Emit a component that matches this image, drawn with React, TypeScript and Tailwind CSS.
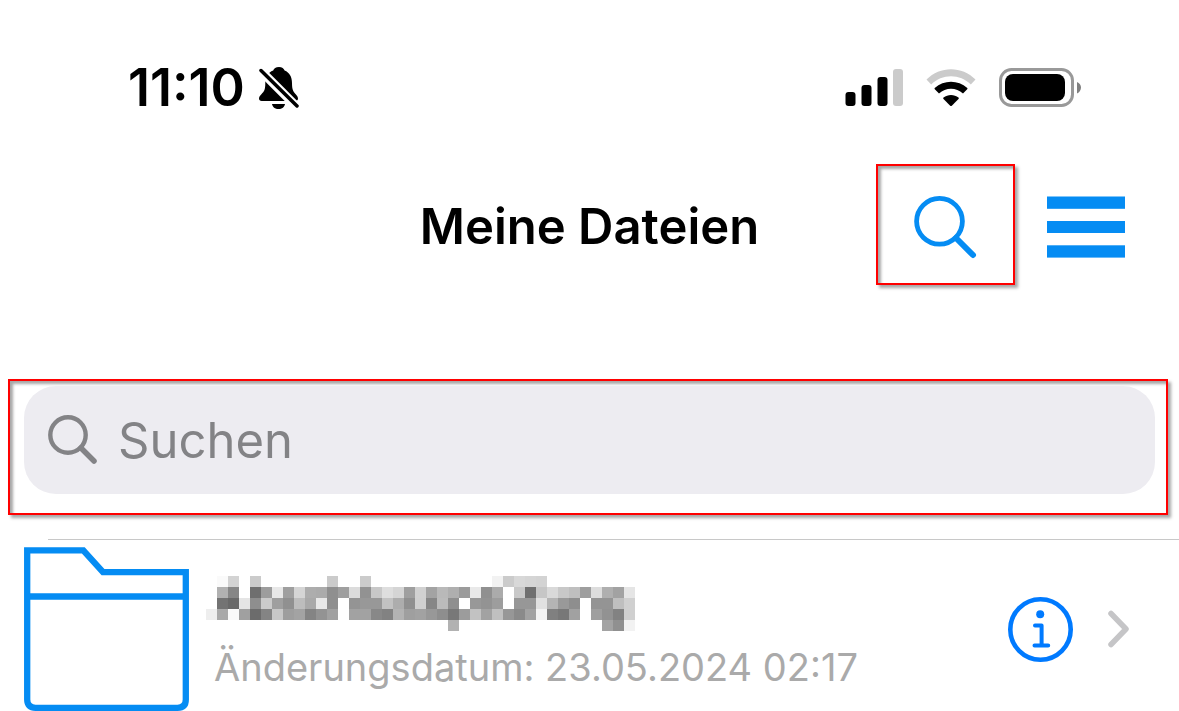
interface FileItem {
  id: string;
  changedAt: string;
  mosaic: string[];
}

// Hidden file names are drawn as grey tiles, two hex digits per tile
const files: FileItem[] = [
  {
    id: 'folder-1',
    changedAt: '23.05.2024 02:17',
    mosaic: [
      'fffad3ffcbffffffffffffcbffffcbfffffffffffffffffffffff2cbd8d5d3ffffffffffffffff',
      'ffb186ff6f9de89fd5adab8f9fdc92c8ded59fd1a3b9af9be990abffc86fc6d9c8bf9eddafa2e5',
      'ff7369e58ecb9f90bda9e88fff949898c2ad90d086bb8fff98939dff9797e1b4998eff9494bfd0',
      'eea9faa06c84c89ea38493a1ffa2a28882b39fa2988e789cc2a2c0978aa2f38078a1ff9f9282d0',
      'ffffffffffffffffffffffffffffffffffffffffffffb2ffffffffffffffffffffffffffa390f2'
    ]
  }
];

const TILE = 11;

const HiddenName = ({ rows }: { rows: string[] }) => (
  <svg width="429" height="55" shapeRendering="crispEdges" role="img" aria-label="Name ausgeblendet">
    {rows.map((row, y) =>
      (row.match(/../g) || []).map((tone, x) => (
        <rect
          key={`${x}-${y}`}
          x={x * TILE}
          y={y * TILE}
          width={TILE}
          height={TILE}
          fill={`#${tone}${tone}${tone}`}
        />
      ))
    )}
  </svg>
);

const BellOffIcon = () => (
  <svg width="40" height="44" viewBox="0 0 40 44" aria-hidden="true">
    <path d="M20 1C16.8 1 14.7 2.6 14.2 4.6C9 6.5 6.3 11 6.3 17C6.3 24 5 25.5 2.6 28C1 29.7 0 31 0 32.5C0 34 1 35 2.7 35H36C38 35 39 34 39 32.5C39 31 38 29.7 36.5 28C34 25.5 33 23 33 17C33 11 30.5 6.5 25.6 4.6C25 2.6 23 1 20 1Z" />
    <path d="M13 38H26C25.5 41 23 43 19.5 43S13.5 41 13 38Z" />
    <path d="M-1 2L39 42" stroke="white" strokeWidth="9" />
    <path d="M2 4.5L38 40" stroke="black" strokeWidth="3.5" strokeLinecap="round" />
  </svg>
);

const SignalIcon = () => (
  <svg width="58" height="38" viewBox="0 0 58 38" aria-hidden="true">
    <rect x="0.5" y="23" width="10" height="14" rx="3" />
    <rect x="16.5" y="16" width="10" height="21" rx="3" />
    <rect x="32.5" y="8" width="10" height="29" rx="3" />
    <rect x="48" y="0" width="10" height="37" rx="3" fill="#cbcbcb" />
  </svg>
);

const WifiIcon = () => (
  <svg width="50" height="38" viewBox="0 0 50 38" aria-hidden="true">
    <path
      d="M0.5 10.5C14 -3.3 36 -3.3 49.5 10.5L44.8 15.5C34 4.5 16 4.5 5.2 15.5Z"
      fill="#cbcbcb"
    />
    <path d="M8.7 19C18 10.5 32 10.5 41.3 19C41.6 19.5 41.6 19.9 41.2 20.3L37 24.5C30.2 18.2 19.8 18.2 13 24.5L8.8 20.3C8.4 19.9 8.4 19.5 8.7 19Z" />
    <path d="M17.5 28.5C21.8 25 28.2 25 32.5 28.5C33 29 33 29.5 32.5 30L25.8 36.7C25.3 37.2 24.7 37.2 24.2 36.7L17.5 30C17 29.5 17 29 17.5 28.5Z" />
  </svg>
);

const BatteryIcon = () => (
  <svg width="82" height="40" viewBox="0 0 82 40" aria-hidden="true">
    <rect x="1.5" y="1.5" width="72" height="36" rx="11" fill="none" stroke="#999" strokeWidth="3" />
    <rect x="6" y="6" width="60" height="27" rx="8" />
    <path d="M78 14C80.5 15 82 17.2 82 19.5S80.5 24.5 78 25.5Z" fill="#808080" />
  </svg>
);

const SearchIcon = () => (
  <svg width="64" height="64" viewBox="0 0 64 64" fill="none" stroke="currentColor" aria-hidden="true">
    <circle cx="25.5" cy="26.3" r="22.9" strokeWidth="4.8" />
    <path d="M42 43L59 60" strokeWidth="6" strokeLinecap="round" />
  </svg>
);

const FieldSearchIcon = () => (
  <svg width="50" height="50" viewBox="0 0 50 50" fill="none" stroke="currentColor" aria-hidden="true">
    <circle cx="20" cy="20" r="17.7" strokeWidth="4.4" />
    <path d="M33 33L46 46" strokeWidth="5.5" strokeLinecap="round" />
  </svg>
);

const MenuIcon = () => (
  <svg width="78" height="62" viewBox="0 0 78 62" fill="currentColor" aria-hidden="true">
    <rect y="0.5" width="78" height="12.3" />
    <rect y="25" width="78" height="12" />
    <rect y="49.3" width="78" height="12.3" />
  </svg>
);

const FolderIcon = () => (
  <svg
    width="165"
    height="164"
    viewBox="0 0 165 164"
    fill="none"
    stroke="#058cf3"
    strokeWidth="6.3"
    className="shrink-0"
    aria-hidden="true"
  >
    <path d="M3.2 3.3H59.3L79 25.2H161.8V152.5Q161.8 160.8 153.5 160.8H11.5Q3.2 160.8 3.2 152.5Z" />
    <path d="M3 49.5H162" />
  </svg>
);

const InfoIcon = () => (
  <svg width="65" height="65" viewBox="0 0 65 65" fill="none" stroke="currentColor" aria-hidden="true">
    <circle cx="32.5" cy="32.5" r="30.2" strokeWidth="4.6" />
    <circle cx="32.2" cy="17.2" r="4" fill="currentColor" stroke="none" />
    <path
      d="M27 28.5H33.6V48.5M26.5 48.5H40.2"
      strokeWidth="4"
      strokeLinecap="round"
      strokeLinejoin="round"
    />
  </svg>
);

const ChevronIcon = () => (
  <svg width="22" height="38" viewBox="0 0 22 38" fill="none" stroke="currentColor" aria-hidden="true">
    <path d="M3 3.5L18 19L3 34.5" strokeWidth="5.5" strokeLinecap="round" strokeLinejoin="round" />
  </svg>
);

const StatusBar = () => (
  <div className="flex h-16 items-center justify-between pl-32 pr-[98px]">
    <div className="flex items-center gap-3.5">
      <span className="text-[52px] font-semibold leading-[60px]">11:10</span>
      <BellOffIcon />
    </div>
    <div className="flex items-center gap-[23px]">
      <SignalIcon />
      <WifiIcon />
      <BatteryIcon />
    </div>
  </div>
);

const Header = () => (
  <header className="mt-11 grid h-[126px] grid-cols-[1fr_auto_1fr] items-center">
    <h1 className="col-start-2 text-[49px] font-semibold leading-[60px]">Meine Dateien</h1>
    <div className="flex h-full items-center justify-end gap-8 pr-[54px] text-[#058cf3]">
      <button
        type="button"
        aria-label="Suche öffnen"
        className="flex h-[121px] w-[139px] items-center justify-center self-start border-2 border-[#f00] pt-1 shadow-[3px_3px_3px_rgba(0,0,0,0.35),inset_3px_3px_3px_rgba(0,0,0,0.35)]"
      >
        <SearchIcon />
      </button>
      <button type="button" aria-label="Menü">
        <MenuIcon />
      </button>
    </div>
  </header>
);

const SearchBar = () => (
  <div className="ml-2 mr-[11px] mt-[89px] border-2 border-[#f00] pb-[19px] pl-[14px] pr-[11px] pt-[5px] shadow-[3px_3px_3px_rgba(0,0,0,0.35),inset_3px_3px_3px_rgba(0,0,0,0.35)]">
    <label className="flex h-[108px] items-center gap-5 rounded-[32px] bg-[#edecf1] px-6 text-[#838386]">
      <FieldSearchIcon />
      <input
        type="search"
        aria-label="Suchen"
        placeholder="Suchen"
        className="min-w-0 flex-1 bg-transparent pt-0.5 text-[49px] leading-[60px] outline-none placeholder:text-[#838386]"
      />
    </label>
  </div>
);

const FileRow = ({ file }: { file: FileItem }) => (
  <li className="flex items-center pl-6 pr-[49px] pt-[7px]">
    <FolderIcon />
    <div className="ml-[17px] flex-1 pt-2">
      <HiddenName rows={file.mosaic} />
      <p className="ml-2 mt-3 whitespace-nowrap text-[38px] leading-[48px] text-[#aaa]">
        Änderungsdatum: {file.changedAt}
      </p>
    </div>
    <button type="button" aria-label="Informationen" className="text-[#007aff]">
      <InfoIcon />
    </button>
    <button type="button" aria-label="Öffnen" className="ml-[35px] text-[#c5c5c7]">
      <ChevronIcon />
    </button>
  </li>
);

const App = () => {
  return (
    <main className="bg-white pt-14 font-['Inter',sans-serif] text-black">
      <StatusBar />
      <Header />
      <SearchBar />
      <div className="ml-12 mt-6 h-px bg-[#c8c8c8]" />
      <ul>
        {files.map(file => (
          <FileRow key={file.id} file={file} />
        ))}
      </ul>
    </main>
  );
};

export default App;
